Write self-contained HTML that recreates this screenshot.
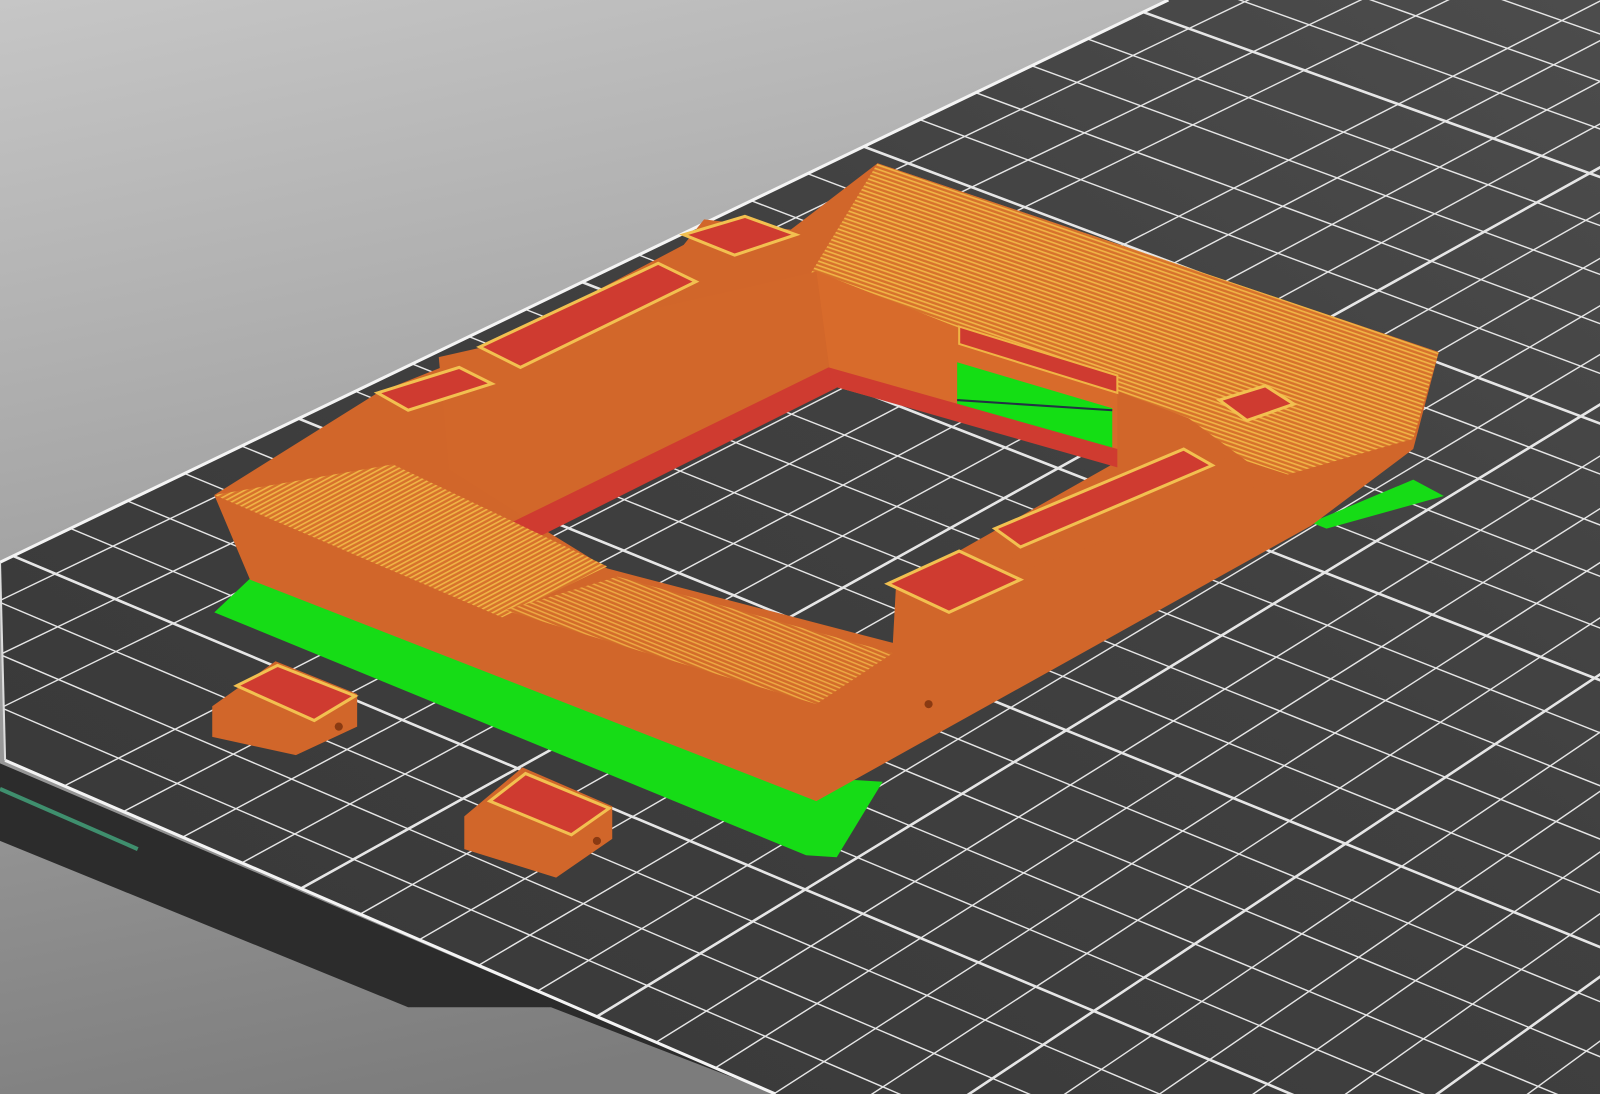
<!DOCTYPE html>
<html><head><meta charset="utf-8"><style>html,body{margin:0;padding:0;overflow:hidden;background:#999;width:1600px;height:1094px}svg{display:block}</style></head>
<body>
<svg id="s" width="1600" height="1094" viewBox="0 0 1568 1072" preserveAspectRatio="none" xmlns="http://www.w3.org/2000/svg">
<defs>
<linearGradient id="bg" x1="0" y1="0" x2="0.3" y2="1"><stop offset="0" stop-color="#c6c6c6"/><stop offset="0.5" stop-color="#a2a2a2"/><stop offset="1" stop-color="#7c7c7c"/></linearGradient>
<linearGradient id="bed" x1="0" y1="1" x2="1" y2="0"><stop offset="0" stop-color="#383838"/><stop offset="0.6" stop-color="#404040"/><stop offset="1" stop-color="#4c4c4c"/></linearGradient>
<clipPath id="bc"><polygon points="0,551 1145,0 1568,0 1568,1072 760,1072 5,745"/></clipPath>
<pattern id="str" patternUnits="userSpaceOnUse" width="10" height="4" patternTransform="rotate(19)"><rect width="10" height="4" fill="#d7722c"/><rect width="10" height="1.6" fill="#f0b445"/></pattern>
<pattern id="str2" patternUnits="userSpaceOnUse" width="10" height="4" patternTransform="rotate(22)"><rect width="10" height="4" fill="#d36c2a"/><rect width="10" height="1.5" fill="#eda842"/></pattern>
<pattern id="strL" patternUnits="userSpaceOnUse" width="10" height="4" patternTransform="rotate(-28)"><rect width="10" height="4" fill="#d7722c"/><rect width="10" height="1.6" fill="#f0b445"/></pattern>
</defs>
<rect width="1568" height="1072" fill="url(#bg)"/>
<polygon points="0,748 760,1072 540,987 400,987 0,824" fill="#2c2c2c"/>
<line x1="0" y1="773" x2="135" y2="832" stroke="#3f8f6e" stroke-width="4"/>
<polygon points="0,551 1145,0 1568,0 1568,1072 760,1072 5,745" fill="url(#bed)"/>
<g id="grid" clip-path="url(#bc)" stroke="#e6e6e6" fill="none"></g>
<line x1="0" y1="551" x2="1145" y2="0" stroke="#f4f4f4" stroke-width="3"/>
<line x1="5" y1="745" x2="760" y2="1072" stroke="#f4f4f4" stroke-width="3"/>
<line x1="0" y1="551" x2="5" y2="745" stroke="#ddd" stroke-width="2"/>
<polygon points="245,567 800,762 865,766 820,840 790,838 210,600" fill="#16dc16"/>
<polygon points="1285,512 1385,470 1415,486 1300,518" fill="#16dc16"/>
<path fill-rule="evenodd" fill="#d1662a" d="M210,485 L370,385 L470,345 L670,240 L690,215 L775,225 L860,160 L1410,345 L1385,440 L1285,515 L800,785 L245,568 Z M530,517 L815,378 L1090,455 L975,520 L878,575 L875,630 L595,557 Z"/>
<polygon points="780,292 860,160 1410,345 1385,430 1262,465 1222,452 1165,410 1100,385 800,266" fill="url(#str)"/>
<polygon points="800,266 1095,383 1095,456 815,378" fill="#d86b2b"/>
<polygon points="940,320 1095,368 1095,385 940,337" fill="#cf3b30" stroke="#f0b445" stroke-width="2"/>
<polygon points="938,355 1090,400 1090,455 938,405" fill="#14de14"/>
<line x1="938" y1="392" x2="1090" y2="402" stroke="#234" stroke-width="2"/>
<polygon points="430,350 800,266 815,378 530,517 440,460" fill="#d2672a"/>
<polygon points="495,515 812,360 820,380 530,525" fill="#cf3b30"/>
<polygon points="812,360 1095,440 1095,458 815,378" fill="#cf3b30"/>
<polygon points="210,485 385,455 595,555 492,605" fill="url(#strL)"/>
<polygon points="495,598 605,565 875,640 800,690" fill="url(#str2)"/>
<polygon points="975,518 1160,438 1220,455 1250,470 1000,560" fill="#d1662a"/>
<polygon points="470,340 645,258 682,276 510,360" fill="#cf3b30" stroke="#f2c050" stroke-width="3"/>
<polygon points="370,385 450,360 482,376 400,402" fill="#cf3b30" stroke="#f2c050" stroke-width="3"/>
<polygon points="670,230 730,212 780,230 720,250" fill="#cf3b30" stroke="#f2c050" stroke-width="3"/>
<polygon points="975,518 1160,440 1188,456 1000,536" fill="#cf3b30" stroke="#f2c050" stroke-width="3"/>
<polygon points="870,572 940,540 1000,568 930,600" fill="#cf3b30" stroke="#f2c050" stroke-width="3"/>
<polygon points="1195,392 1240,378 1268,396 1222,412" fill="#cf3b30" stroke="#f2c050" stroke-width="3"/>
<polygon points="208,692 270,648 350,680 350,712 290,740 208,722" fill="#d1662a"/>
<polygon points="232,672 272,652 348,682 308,706" fill="#cf3b30" stroke="#f2c050" stroke-width="3"/>
<circle cx="332" cy="712" r="4" fill="#8a3a12"/>
<polygon points="455,800 512,752 600,790 600,822 545,860 455,832" fill="#d1662a"/>
<polygon points="480,785 515,758 597,792 560,818" fill="#cf3b30" stroke="#f2c050" stroke-width="3"/>
<circle cx="585" cy="824" r="4" fill="#8a3a12"/>
<circle cx="910" cy="690" r="4" fill="#8a3a12"/>
</svg>
<script>
(function(){
var g=document.getElementById('grid'),h='';
function L(x1,y1,x2,y2,w){h+='<line x1="'+x1.toFixed(1)+'" y1="'+y1.toFixed(1)+'" x2="'+x2.toFixed(1)+'" y2="'+y2.toFixed(1)+'" stroke-width="'+w+'"/>';}
for(var k=1;k<32;k++){var c=745;for(var j=0;j<k;j++)c-=(52-j*0.4);var s=0.433-0.003*k;
 L(-10,c-10*s,1600,c+1600*s,(k%5==4)?2.6:1.4);}
for(var k=-5;k<36;k++){if(k==0)continue;var x0=5+58*k,y0=745+0.433*58*k;var s=-0.5-0.011*k;if(s>-0.481)s=-0.481;
 L(x0-900,y0-900*s,x0+1800,y0+1800*s,(k%5==0)?2.6:1.4);}
g.innerHTML=h;
})();
</script>
</body></html>
